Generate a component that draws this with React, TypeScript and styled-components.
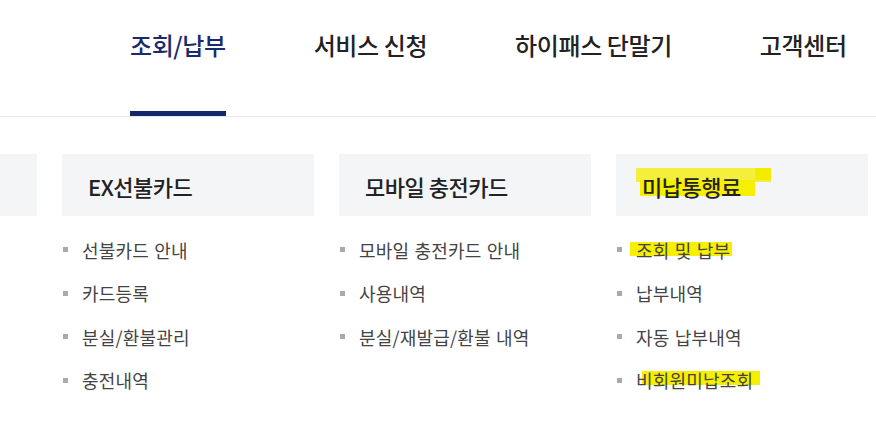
import React from "react";
import styled, { createGlobalStyle } from "styled-components";

const Global = createGlobalStyle`
  html, body { margin: 0; padding: 0; background: #fff; }
  body { font-family: "Noto Sans CJK KR", "Noto Sans", sans-serif; }
  * { box-sizing: border-box; }
`;

const Page = styled.div`
  width: 876px;
  height: 429px;
  overflow: hidden;
  background: #fff;
`;

const Nav = styled.nav`
  display: flex;
  gap: 88px;
  padding-left: 130px;
  height: 117px;
  border-bottom: 1px solid #e8e8e8;
`;

const NavItem = styled.a<{ $active?: boolean }>`
  display: flex;
  align-items: flex-start;
  padding-top: 27px;
  height: 116px;
  font-size: 24px;
  font-weight: 500;
  letter-spacing: -0.4px;
  color: ${(p) => (p.$active ? "#1a2a6c" : "#222")};
  border-bottom: 5px solid ${(p) => (p.$active ? "#13286a" : "transparent")};
  text-decoration: none;
  white-space: nowrap;
`;

const Columns = styled.div`
  display: flex;
  gap: 25px;
  margin-left: -215px;
  padding-top: 37px;
`;

const Column = styled.section`
  width: 252px;
  flex: none;
`;

const Header = styled.div`
  position: relative;
  height: 62px;
  background: #f4f5f7;
  display: flex;
  align-items: center;
  padding-left: 26px;
  padding-top: 1px;
`;

const HeaderText = styled.h3`
  position: relative;
  margin: 0;
  font-size: 22px;
  font-weight: 500;
  color: #222;
  letter-spacing: -0.5px;
`;

const Marker = styled.span<{ $l: number; $t: number; $w: number; $h: number; $c?: string }>`
  position: absolute;
  left: ${(p) => p.$l}px;
  top: ${(p) => p.$t}px;
  width: ${(p) => p.$w}px;
  height: ${(p) => p.$h}px;
  background: ${(p) => p.$c ?? "#f6ef00"};
`;

const List = styled.ul`
  list-style: none;
  margin: 0;
  padding: 12px 0 0;
`;

const Item = styled.li`
  display: flex;
  align-items: center;
  height: 43.5px;
`;

const Bullet = styled.span`
  width: 5px;
  height: 5px;
  background: #aaa;
  margin-left: 1px;
  margin-right: 14px;
  flex: none;
`;

const ItemText = styled.span`
  position: relative;
  font-size: 18px;
  line-height: 20px;
  color: #444;
  letter-spacing: 0.2px;
  word-spacing: 1px;
  white-space: nowrap;
`;

const Label = styled.span`
  position: relative;
`;

type Mark = { l: number; t: number; w: number; h: number };
type Entry = { text: string; mark?: Mark };
type Col = { title: string; items: Entry[]; marked?: boolean };

const cols: Col[] = [
  { title: "", items: [] },
  {
    title: "EX선불카드",
    items: [
      { text: "선불카드 안내" },
      { text: "카드등록" },
      { text: "분실/환불관리" },
      { text: "충전내역" },
    ],
  },
  {
    title: "모바일 충전카드",
    items: [
      { text: "모바일 충전카드 안내" },
      { text: "사용내역" },
      { text: "분실/재발급/환불 내역" },
    ],
  },
  {
    title: "미납통행료",
    marked: true,
    items: [
      { text: "조회 및 납부", mark: { l: -6, t: 2, w: 102, h: 14 } },
      { text: "납부내역" },
      { text: "자동 납부내역" },
      { text: "비회원미납조회", mark: { l: 6, t: 1, w: 118, h: 14 } },
    ],
  },
];

const navs = ["조회/납부", "서비스 신청", "하이패스 단말기", "고객센터"];

export default function App() {
  return (
    <Page>
      <Global />
      <Nav>
        {navs.map((n, i) => (
          <NavItem key={n} $active={i === 0}>
            {n}
          </NavItem>
        ))}
      </Nav>
      <Columns>
        {cols.map((c, i) => (
          <Column key={i}>
            <Header>
              {c.marked && (
                <>
                  <Marker $l={20} $t={14} $w={135} $h={14} $c="#f4ee3c" />
                  <Marker $l={139} $t={14} $w={16} $h={12} $c="#f3ec00" />
                  <Marker $l={24} $t={26} $w={115} $h={16} />
                </>
              )}
              {c.title && <HeaderText>{c.title}</HeaderText>}
            </Header>
            <List>
              {c.items.map((it) => (
                <Item key={it.text}>
                  <Bullet />
                  <ItemText>
                    {it.mark && <Marker $l={it.mark.l} $t={it.mark.t} $w={it.mark.w} $h={it.mark.h} />}
                    <Label>{it.text}</Label>
                  </ItemText>
                </Item>
              ))}
            </List>
          </Column>
        ))}
      </Columns>
    </Page>
  );
}
